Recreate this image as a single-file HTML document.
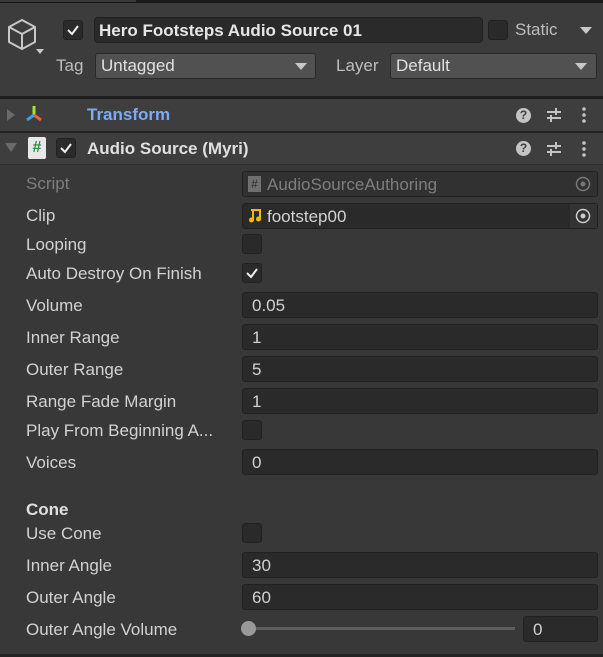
<!DOCTYPE html>
<html><head><style>
*{box-sizing:border-box;margin:0;padding:0}
body{width:603px;height:657px;background:#383838;font-family:"Liberation Sans",sans-serif;color:#d2d2d2;font-size:17px;position:relative;overflow:hidden}
.a{position:absolute}
.f{position:absolute;background:#2a2a2a;border:1px solid #212121;border-radius:3px;height:26px;left:242px;width:356px;padding-left:9px;line-height:25px;color:#d2d2d2}
.l{position:absolute;left:26px;line-height:21px}
.cb{position:absolute;width:20px;height:20px;background:#2a2a2a;border:1px solid #212121;border-radius:3px}
.dd{position:absolute;background:#515151;border:1px solid #2a2a2a;border-radius:3px;height:26px;line-height:24px;padding-left:5px;color:#e0e0e0}
.tri{position:absolute;width:0;height:0;border-left:6px solid transparent;border-right:6px solid transparent;border-top:7px solid #c8c8c8}
.q{position:absolute;left:516px;width:15px;height:15px;border-radius:50%;background:#c4c4c4;color:#3e3e3e;font-size:12px;font-weight:bold;text-align:center;line-height:15px}
</style></head><body>
<div class="a" style="left:0;top:0;width:603px;height:3px;background:#191919"></div>
<div class="a" style="left:0;top:0;width:136px;height:2px;background:#383838"></div>
<div class="a" style="left:0;top:3px;width:603px;height:93px;background:#3c3c3c"></div>
<svg class="a" style="left:6px;top:17px" width="40" height="44" viewBox="0 0 40 44"><path d="M3 10 L16 3 L29 10 L29 25 L16 32 L3 25 Z M3 10 L16 17 L29 10 M16 17 L16 32" fill="none" stroke="#c8c8c8" stroke-width="2" stroke-linejoin="round"/><path d="M30 32 L38 32 L34 37 Z" fill="#c8c8c8"/></svg>
<div class="cb" style="left:63px;top:20px"></div>
<svg class="a" style="left:63px;top:20px" width="20" height="20"><path d="M5 10 L9 14 L15 6" stroke="#eee" stroke-width="2" fill="none"/></svg>
<div class="f" style="left:94px;top:17px;width:389px;height:26px;font-weight:bold;color:#e6e6e6;padding-left:4px;border-radius:4px">Hero Footsteps Audio Source 01</div>
<div class="cb" style="left:488px;top:20px"></div>
<div class="a" style="left:515px;top:20px;color:#bdbdbd;line-height:20px">Static</div>
<div class="tri" style="left:580px;top:27px"></div>
<div class="a" style="left:56px;top:56px;color:#bdbdbd;line-height:20px">Tag</div>
<div class="dd" style="left:95px;top:53px;width:221px">Untagged</div>
<div class="tri" style="left:295px;top:63px"></div>
<div class="a" style="left:336px;top:56px;color:#bdbdbd;line-height:20px">Layer</div>
<div class="dd" style="left:390px;top:53px;width:207px">Default</div>
<div class="tri" style="left:575px;top:63px"></div>
<div class="a" style="left:0;top:96px;width:603px;height:3px;background:#1e1e1e"></div>
<div class="a" style="left:0;top:99px;width:603px;height:32px;background:#3e3e3e"></div>
<div class="a" style="left:0;top:131px;width:603px;height:2px;background:#232323"></div>
<div class="a" style="left:0;top:133px;width:603px;height:31px;background:#3e3e3e"></div>
<div class="a" style="left:0;top:164px;width:603px;height:1px;background:#303030"></div>
<div class="a" style="left:7px;top:109px;border-top:6px solid transparent;border-bottom:6px solid transparent;border-left:8px solid #6a6a6a"></div>
<svg class="a" style="left:24px;top:104px" width="20" height="20"><path d="M10 2 L10 11" stroke="#a6e22e" stroke-width="3"/><path d="M10 11 L3 16" stroke="#3aa3e8" stroke-width="3"/><path d="M10 11 L17 16" stroke="#f0603a" stroke-width="3"/></svg>
<div class="a" style="left:87px;top:105px;color:#7cabf2;font-weight:bold;line-height:20px">Transform</div>
<div class="a" style="left:5px;top:143px;border-left:6px solid transparent;border-right:6px solid transparent;border-top:9px solid #6a6a6a"></div>
<div class="a" style="left:28px;top:137px;width:18px;height:22px;background:#e8e8e8;border-radius:2px;color:#2c8a3a;font-size:16px;text-align:center;line-height:22px;font-weight:bold">#</div>
<div class="cb" style="left:56px;top:138px"></div>
<svg class="a" style="left:56px;top:138px" width="20" height="20"><path d="M5 10 L9 14 L15 6" stroke="#eee" stroke-width="2" fill="none"/></svg>
<div class="a" style="left:87px;top:139px;color:#e0e0e0;font-weight:bold;line-height:20px">Audio Source (Myri)</div>
<div class="q" style="top:108px">?</div>
<div class="q" style="top:141px">?</div>
<svg class="a" style="left:545px;top:106px" width="18" height="18"><path d="M2 6 H16 M2 12 H16 M11 2 V9 M6 9 V16" stroke="#c4c4c4" stroke-width="2"/></svg>
<svg class="a" style="left:545px;top:140px" width="18" height="18"><path d="M2 6 H16 M2 12 H16 M11 2 V9 M6 9 V16" stroke="#c4c4c4" stroke-width="2"/></svg>
<svg class="a" style="left:578px;top:106px" width="12" height="18"><circle cx="6" cy="3" r="1.8" fill="#c4c4c4"/><circle cx="6" cy="9" r="1.8" fill="#c4c4c4"/><circle cx="6" cy="15" r="1.8" fill="#c4c4c4"/></svg>
<svg class="a" style="left:578px;top:140px" width="12" height="18"><circle cx="6" cy="3" r="1.8" fill="#c4c4c4"/><circle cx="6" cy="9" r="1.8" fill="#c4c4c4"/><circle cx="6" cy="15" r="1.8" fill="#c4c4c4"/></svg>

<div class="l" style="top:173px;color:#7e7e7e">Script</div>
<div class="f" style="top:171px;background:#313131;color:#7e7e7e;padding-left:24px">AudioSourceAuthoring</div>
<div class="a" style="left:248px;top:176px;width:13px;height:16px;background:#707070;color:#2e2e2e;font-size:12px;line-height:16px;text-align:center">#</div>
<svg class="a" style="left:574px;top:175px" width="18" height="18"><circle cx="9" cy="9" r="6.5" fill="none" stroke="#777" stroke-width="1.5"/><circle cx="9" cy="9" r="2.5" fill="#777"/></svg>
<div class="l" style="top:205px">Clip</div>
<div class="f" style="top:203px;padding-left:24px">footstep00</div>
<svg class="a" style="left:248px;top:207px" width="14" height="16"><path d="M3 3 H12 V12 M5 3 V13" stroke="#f5b800" stroke-width="2" fill="none"/><circle cx="3.5" cy="13" r="2.5" fill="#f5b800"/><circle cx="10.5" cy="12" r="2.5" fill="#f5b800"/></svg>
<div class="a" style="left:570px;top:204px;width:27px;height:24px;background:#333"></div>
<svg class="a" style="left:574px;top:207px" width="18" height="18"><circle cx="9" cy="9" r="6.5" fill="none" stroke="#ccc" stroke-width="1.5"/><circle cx="9" cy="9" r="2.5" fill="#ccc"/></svg>
<div class="l" style="top:234px">Looping</div>
<div class="cb" style="left:242px;top:234px"></div>
<div class="l" style="top:263px">Auto Destroy On Finish</div>
<div class="cb" style="left:242px;top:263px"></div>
<svg class="a" style="left:242px;top:263px" width="20" height="20"><path d="M5 10 L9 14 L15 6" stroke="#eee" stroke-width="2" fill="none"/></svg>
<div class="l" style="top:295px">Volume</div><div class="f" style="top:292px">0.05</div>
<div class="l" style="top:327px">Inner Range</div><div class="f" style="top:324px">1</div>
<div class="l" style="top:359px">Outer Range</div><div class="f" style="top:356px">5</div>
<div class="l" style="top:391px">Range Fade Margin</div><div class="f" style="top:388px">1</div>
<div class="l" style="top:420px">Play From Beginning A...</div><div class="cb" style="left:242px;top:420px"></div>
<div class="l" style="top:452px">Voices</div><div class="f" style="top:449px">0</div>
<div class="l" style="top:499px;font-weight:bold;color:#e0e0e0">Cone</div>
<div class="l" style="top:523px">Use Cone</div><div class="cb" style="left:242px;top:523px"></div>
<div class="l" style="top:555px">Inner Angle</div><div class="f" style="top:552px">30</div>
<div class="l" style="top:587px">Outer Angle</div><div class="f" style="top:584px">60</div>
<div class="l" style="top:619px">Outer Angle Volume</div>
<div class="a" style="left:248px;top:627px;width:267px;height:3px;background:#5e5e5e"></div>
<div class="a" style="left:241px;top:621px;width:15px;height:15px;border-radius:50%;background:#999"></div>
<div class="f" style="top:616px;left:523px;width:75px">0</div>
<div class="a" style="left:0;top:654px;width:603px;height:3px;background:#232323"></div>
</body></html>
